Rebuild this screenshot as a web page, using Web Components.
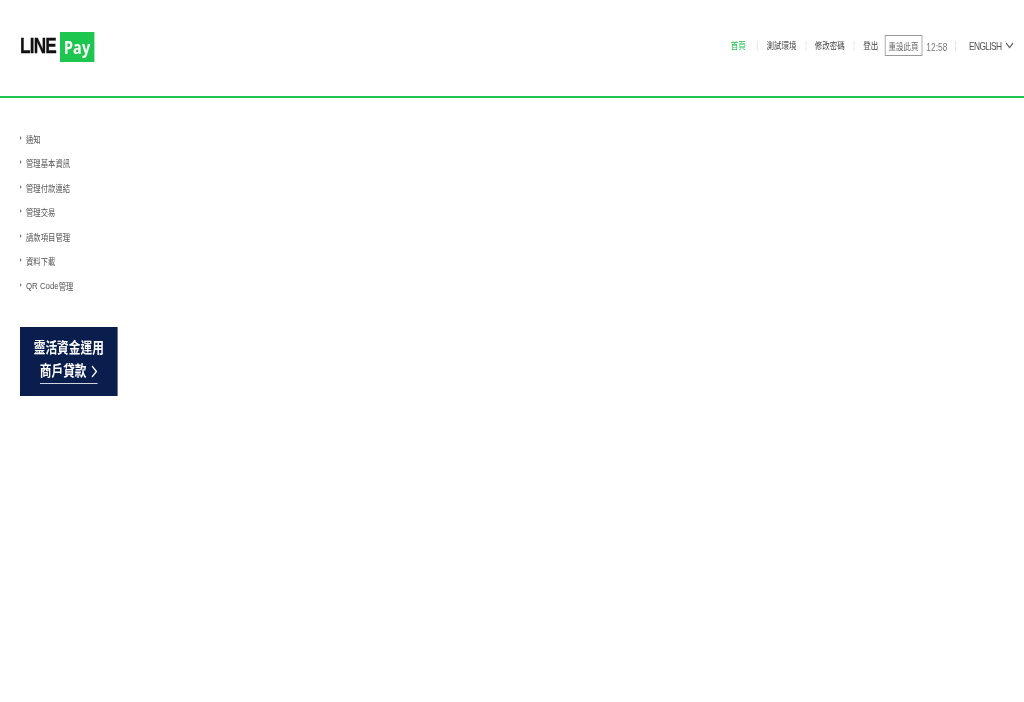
<!DOCTYPE html>
<html lang="zh-Hant">
<head>
<meta charset="utf-8">
<title>LINE Pay</title>
<style>
  html, body { margin: 0; background: #fff; overflow: hidden; height: 100%; }
  body { font-family: "Liberation Sans", "Noto Sans CJK TC", sans-serif; }
</style>
</head>
<body>
<lp-app>
  <lp-header slot="header">
    <lp-nav-link active>首頁</lp-nav-link>
    <lp-nav-link divider>測試環境</lp-nav-link>
    <lp-nav-link divider>修改密碼</lp-nav-link>
    <lp-nav-link divider last>登出</lp-nav-link>
    <lp-session time="12:58">重設此頁</lp-session>
    <lp-lang>ENGLISH</lp-lang>
  </lp-header>
  <lp-menu>
    <lp-menu-item>通知</lp-menu-item>
    <lp-menu-item>管理基本資訊</lp-menu-item>
    <lp-menu-item>管理付款連結</lp-menu-item>
    <lp-menu-item>管理交易</lp-menu-item>
    <lp-menu-item>請款項目管理</lp-menu-item>
    <lp-menu-item>資料下載</lp-menu-item>
    <lp-menu-item><span style="font-size:9.8px">QR Code</span>管理</lp-menu-item>
  </lp-menu>
  <lp-banner></lp-banner>
</lp-app>

<script>
// the reference is a 1280 wide page squeezed to 1024, so the stage lays out at 1280 and scales x by .8
function define(name, css, html) {
  customElements.define(name, class extends HTMLElement {
    constructor() {
      super()
      this.attachShadow({ mode: 'open' })
    }
    connectedCallback() {
      const out = typeof html === 'function' ? html(this) : html
      this.shadowRoot.innerHTML = `<style>${css}</style>${out}`
    }
  })
}

define('lp-app', `
  :host {
    display: block;
    width: 1024px;
    height: 702px;
    overflow: hidden;
  }
  .stage {
    width: 1280px;
    transform: scaleX(.8);
    transform-origin: 0 0;
    filter: blur(.45px);
  }
  main { padding: 28.6px 25px 0; }
`, `<div class="stage"><slot name="header"></slot><main><slot></slot></main></div>`)

define('lp-header', `
  :host {
    display: flex;
    align-items: center;
    justify-content: space-between;
    height: 96px;
    padding: 0 13px 0 25px;
    border-bottom: 2px solid #1dc64f;
  }
  .logo { display: flex; align-items: center; gap: 5px; margin-top: -3px; }
  .line {
    font: 700 21.5px "Liberation Sans", sans-serif;
    letter-spacing: -1px;
    color: #111;
    -webkit-text-stroke: .3px #111;
  }
  .pay {
    display: flex; align-items: center; justify-content: center;
    width: 43px; height: 30px;
    background: #1dc64f;
    color: #fff;
    font: 700 18px "Noto Sans", sans-serif;
    letter-spacing: .3px;
  }
  nav { display: flex; align-items: center; margin-top: -5px; }
`, `
  <div class="logo"><span class="line">LINE</span><span class="pay">Pay</span></div>
  <nav><slot></slot></nav>
`)

define('lp-nav-link', `
  :host {
    display: flex;
    align-items: center;
    font-size: 9.4px;
    line-height: 14px;
    color: #444;
    margin-right: 11px;
  }
  :host([active]) { color: #1dc64f; margin-right: 14px; }
  :host([last]) { margin-right: 8px; }
  :host([divider])::before {
    content: "";
    width: 1px; height: 10px;
    background: #e2e2e2;
    margin-right: 11px;
  }
`, `<slot></slot>`)

define('lp-session', `
  :host { display: flex; align-items: center; color: #666; }
  button {
    font: 9.4px "Liberation Sans", "Noto Sans CJK TC", sans-serif;
    color: #666;
    width: 47px; height: 21px;
    padding: 0;
    background: #fff;
    border: 1px solid #999;
    border-radius: 0;
  }
  .time { font-size: 10.5px; margin-left: 5px; color: #777; margin-top: 2px; }
`, el => `<button><slot></slot></button><span class="time">${el.getAttribute('time')}</span>`)

define('lp-lang', `
  :host {
    display: flex;
    align-items: center;
    font-size: 10.5px;
    letter-spacing: -.75px;
    color: #555;
    margin-left: 10px;
  }
  :host::before {
    content: "";
    width: 1px; height: 10px;
    background: #e2e2e2;
    margin-right: 16px;
  }
  svg { margin-left: 5px; }
`, `<slot></slot><svg width="10" height="7" viewBox="0 0 10 7" fill="none" stroke="#555" stroke-width="1.2"><path d="M.7 1 5 5.6 9.3 1"/></svg>`)

define('lp-menu', `
  :host { display: block; margin-bottom: 29.4px; }
`, `<slot></slot>`)

define('lp-menu-item', `
  :host {
    display: flex;
    align-items: center;
    height: 24.5px;
    font-size: 9.2px;
    color: #555;
  }
  i {
    width: 0; height: 0;
    margin-right: 5.5px;
    border-left: 2.5px solid #777;
    border-top: 2px solid transparent;
    border-bottom: 2px solid transparent;
    margin-top: -2px;
  }
`, `<i></i><slot></slot>`)

define('lp-banner', `
  :host {
    display: flex;
    flex-direction: column;
    align-items: center;
    width: 122px;
    height: 69px;
    box-sizing: border-box;
    padding-top: 10px;
    background: #0a1e4e;
    color: #fff;
    font-weight: 700;
    font-size: 14.6px;
    line-height: 22px;
  }
  .second {
    display: flex;
    align-items: center;
    gap: 6px;
    margin-top: 1px;
    padding-bottom: 1px;
    border-bottom: 1px solid #cfd4de;
  }
`, `
  <div>靈活資金運用</div>
  <div class="second">商戶貸款<svg width="8" height="13" viewBox="0 0 8 13" fill="none" stroke="#fff" stroke-width="1.6"><path d="M1 1 6.5 6.5 1 12"/></svg></div>
`)
</script>
</body>
</html>
